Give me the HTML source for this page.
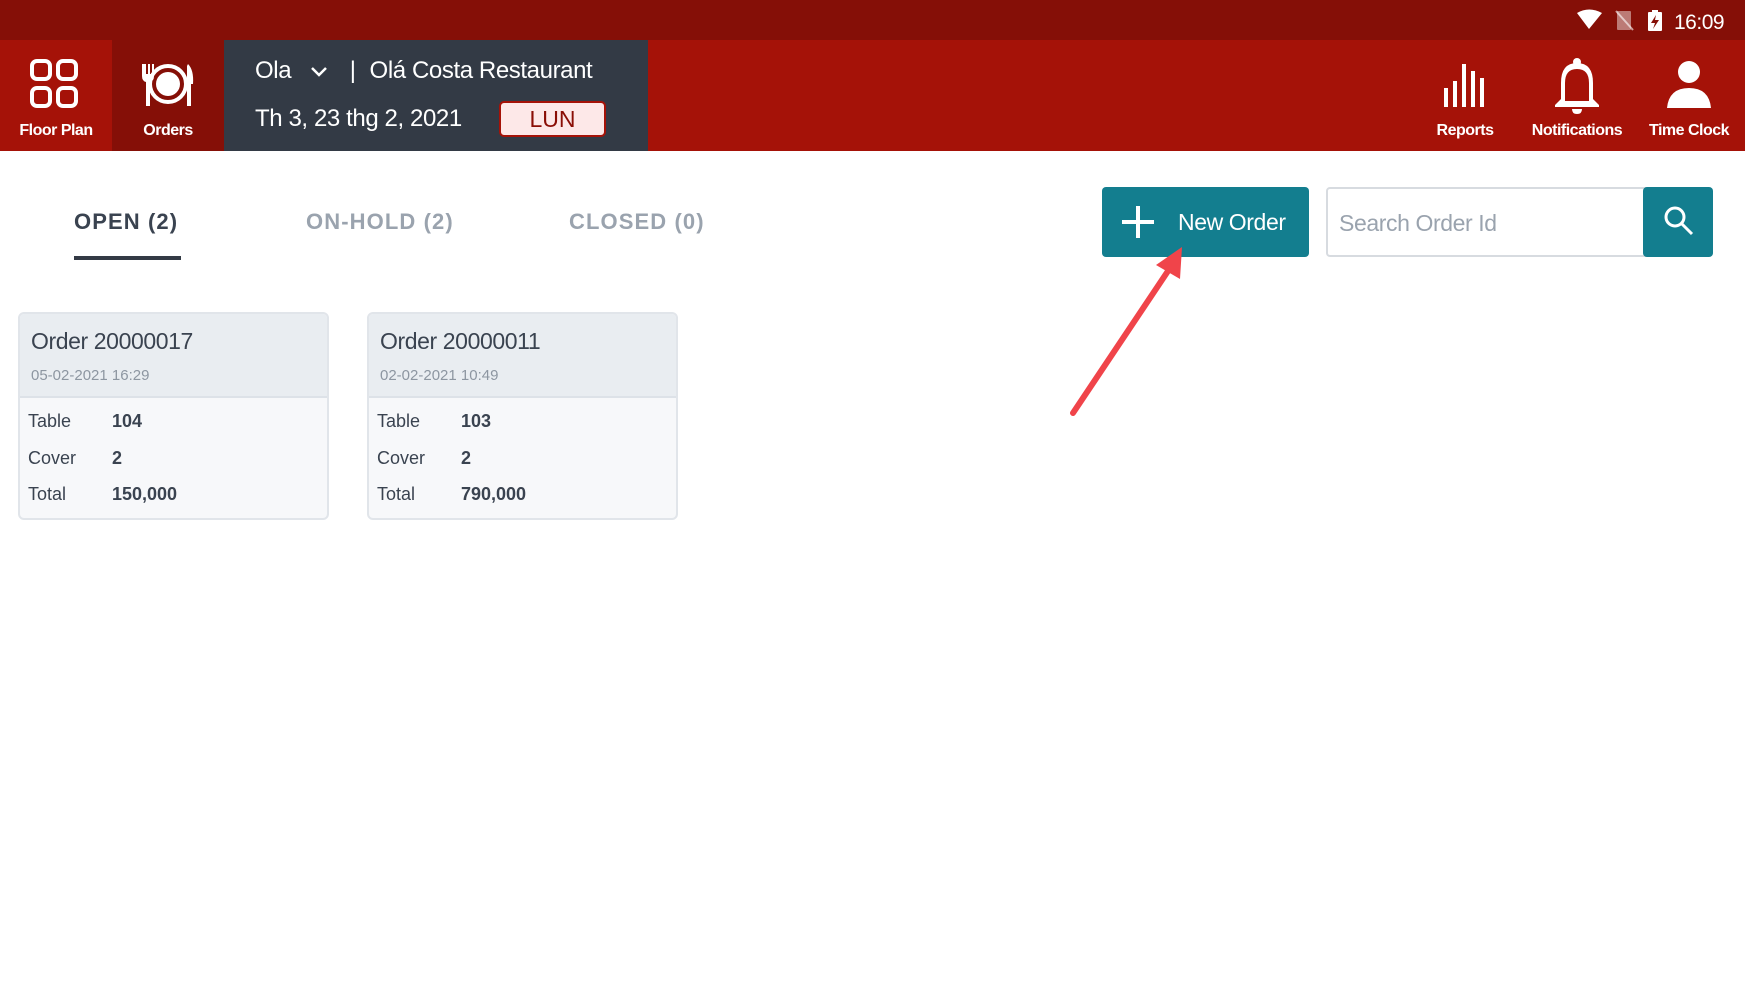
<!DOCTYPE html>
<html><head><meta charset="utf-8"><style>
*{margin:0;padding:0;box-sizing:border-box}
body{width:1745px;height:981px;overflow:hidden;background:#fff;font-family:"Liberation Sans",sans-serif;position:relative}
.abs{position:absolute}
.status{left:0;top:0;width:1745px;height:40px;background:#850f07}
.hdr{left:0;top:40px;width:1745px;height:111px;background:#a51208}
.tile{top:40px;height:111px;width:112px;color:#fff;font-size:16px;font-weight:bold;text-align:center}
.tile span{position:absolute;left:0;right:0;top:82px;letter-spacing:-0.5px}
.panel{left:224px;top:40px;width:424px;height:111px;background:#333a45;color:#fff}
.tab{top:209px;font-size:22px;font-weight:bold;letter-spacing:1.1px;color:#9aa3ae}
.card{width:311px;height:208px;border:2px solid #e1e5ea;border-radius:6px;background:#f7f8fa;overflow:hidden}
.card .h{height:84px;background:#e9edf1;border-bottom:2px solid #dde2e8;padding:14px 0 0 11px}
.card .t{font-size:23px;color:#3a4350;letter-spacing:-0.4px}
.card .d{font-size:15px;color:#8d96a1;margin-top:12px}
.row{position:absolute;left:8px;font-size:18px;color:#3a4350}
.row b{position:absolute;left:84px;font-weight:bold;color:#3a4350;white-space:nowrap}
</style></head><body>
<div class="abs status"></div>
<div class="abs hdr"></div>
<svg class="abs" style="left:1575px;top:8px" width="160" height="26" viewBox="0 0 160 26">
<path d="M2 5 Q14 -2 27 5 L14 21 Z" fill="#fff"/>
<g opacity="0.45"><rect x="42" y="3" width="14" height="19" rx="1" fill="#fff"/></g>
<line x1="41" y1="3" x2="58" y2="22" stroke="#fff" stroke-width="2" opacity="0.6"/>
<rect x="73" y="4" width="14" height="19" rx="1" fill="#fff"/><rect x="77" y="2" width="6" height="3" fill="#fff"/>
<path d="M81 7 L76 15 L80 15 L78 21 L84 12 L80 12 Z" fill="#850f07"/>
<text x="99" y="21" font-family="Liberation Sans" font-size="21" fill="#fff" letter-spacing="-0.5">16:09</text>
</svg>
<div class="abs tile" style="left:0;background:#a51208">
<svg class="abs" style="left:29px;top:18px" width="52" height="52" viewBox="0 0 52 52" fill="none" stroke="#fff" stroke-width="4">
<rect x="3" y="3" width="18" height="18" rx="5"/><rect x="29" y="3" width="18" height="18" rx="5"/>
<rect x="3" y="30" width="18" height="18" rx="5"/><rect x="29" y="30" width="18" height="18" rx="5"/></svg>
<span>Floor Plan</span></div>
<div class="abs tile" style="left:112px;background:#850f07">
<svg class="abs" style="left:28px;top:22px" width="56" height="46" viewBox="0 0 56 46" fill="#fff">
<path d="M2 2v12q0 5 4 6v24h4V20q4-1 4-6V2h-2v10h-2V2H8v10H6V2z"/>
<circle cx="28" cy="22" r="18" fill="none" stroke="#fff" stroke-width="4"/><circle cx="28" cy="22" r="12"/>
<path d="M48 2q6 6 5 20h-2v22h-4V4z"/></svg>
<span>Orders</span></div>
<div class="abs panel">
<div class="abs" style="left:31px;top:17px;font-size:24px;letter-spacing:-0.4px;white-space:nowrap">Ola
<svg style="margin-left:12px;vertical-align:middle" width="20" height="14" viewBox="0 0 20 14"><path d="M3 3l7 7 7-7" stroke="#fff" stroke-width="2.5" fill="none"/></svg>
<span style="margin-left:14px">|</span><span style="margin-left:14px">Olá Costa Restaurant</span></div>
<div class="abs" style="left:31px;top:65px;font-size:24px;letter-spacing:-0.4px">Th 3, 23 thg 2, 2021</div>
<div class="abs" style="left:275px;top:61px;width:107px;height:36px;background:#fde8e8;border:2px solid #a51208;border-radius:5px;color:#8a0e06;font-size:23px;text-align:center;line-height:32px">LUN</div>
</div>
<div class="abs tile" style="left:1409px;width:112px"><svg class="abs" style="left:33px;top:21px" width="50" height="50" viewBox="0 0 50 50" fill="#fff">
<rect x="2" y="27" width="4" height="19"/><rect x="11" y="20" width="4" height="26"/><rect x="20" y="3" width="4" height="43"/><rect x="29" y="10" width="4" height="36"/><rect x="38" y="17" width="4" height="29"/></svg><span>Reports</span></div>
<div class="abs tile" style="left:1521px;width:112px"><svg class="abs" style="left:30px;top:17px" width="52" height="58" viewBox="0 0 52 58" fill="#fff">
<circle cx="26" cy="5" r="4"/><path d="M26 6q-16 0-16 20v16l-6 6v2h44v-2l-6-6V26q0-20-16-20z M14 26q0-14 12-14t12 14v18H14z" fill-rule="evenodd"/><path d="M21 52h10q0 5-5 5t-5-5z"/></svg><span>Notifications</span></div>
<div class="abs tile" style="left:1633px;width:112px"><svg class="abs" style="left:30px;top:20px" width="52" height="50" viewBox="0 0 52 50" fill="#fff">
<circle cx="26" cy="12" r="11"/><path d="M4 48q2-20 22-20t22 20z"/></svg><span>Time Clock</span></div>
<div class="abs tab" style="left:74px;color:#3a4350">OPEN (2)</div>
<div class="abs" style="left:74px;top:256px;width:107px;height:4px;background:#333a45"></div>
<div class="abs tab" style="left:306px">ON-HOLD (2)</div>
<div class="abs tab" style="left:569px">CLOSED (0)</div>
<div class="abs" style="left:1102px;top:187px;width:207px;height:70px;background:#137e8f;border-radius:4px;color:#fff;font-size:23px">
<svg class="abs" style="left:18px;top:17px" width="36" height="36" viewBox="0 0 36 36"><path d="M18 2v32M2 18h32" stroke="#fff" stroke-width="4"/></svg>
<span class="abs" style="left:76px;top:22px;letter-spacing:-0.4px">New Order</span></div>
<div class="abs" style="left:1326px;top:187px;width:330px;height:70px;border:2px solid #d7dbe0;border-radius:4px;color:#9aa3ae;font-size:23px;padding:21px 0 0 11px;letter-spacing:-0.4px">Search Order Id</div>
<div class="abs" style="left:1643px;top:187px;width:70px;height:70px;background:#137e8f;border-radius:4px">
<svg class="abs" style="left:20px;top:18px" width="32" height="32" viewBox="0 0 32 32" fill="none" stroke="#fff" stroke-width="3"><circle cx="12" cy="12" r="9"/><path d="M19 19l10 10"/></svg></div>
<svg class="abs" style="left:1060px;top:235px" width="140" height="190" viewBox="0 0 140 190">
<line x1="13" y1="178" x2="112" y2="30" stroke="#f0444a" stroke-width="6" stroke-linecap="round"/>
<path d="M122 12 L96 30 L120 44 Z" fill="#f0444a"/></svg>
<div class="abs card" style="left:18px;top:312px"><div class="h"><div class="t">Order 20000017</div><div class="d">05-02-2021 16:29</div></div>
<div class="row" style="top:97px">Table<b>104</b></div><div class="row" style="top:134px">Cover<b>2</b></div><div class="row" style="top:170px">Total<b>150,000</b></div></div>
<div class="abs card" style="left:367px;top:312px"><div class="h"><div class="t">Order 20000011</div><div class="d">02-02-2021 10:49</div></div>
<div class="row" style="top:97px">Table<b>103</b></div><div class="row" style="top:134px">Cover<b>2</b></div><div class="row" style="top:170px">Total<b>790,000</b></div></div>
</body></html>
